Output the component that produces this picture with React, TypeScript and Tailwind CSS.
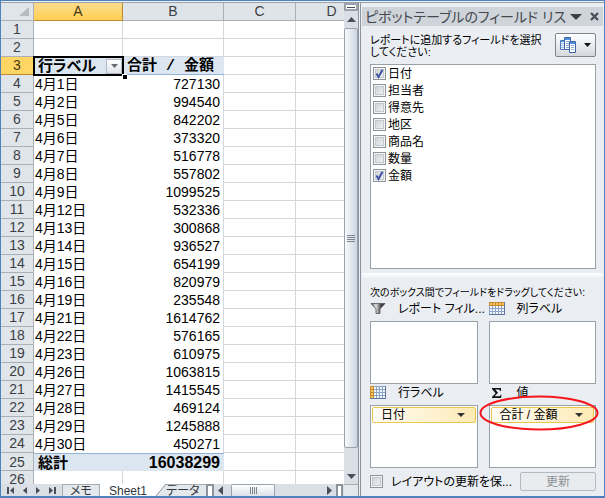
import { useState } from 'react';
import type { ReactNode } from 'react';
import clsx from 'clsx';

const rows: [string, number][] = [
    ['4月1日', 727130],
    ['4月2日', 994540],
    ['4月5日', 842202],
    ['4月6日', 373320],
    ['4月7日', 516778],
    ['4月8日', 557802],
    ['4月9日', 1099525],
    ['4月12日', 532336],
    ['4月13日', 300868],
    ['4月14日', 936527],
    ['4月15日', 654199],
    ['4月16日', 820979],
    ['4月19日', 235548],
    ['4月21日', 1614762],
    ['4月22日', 576165],
    ['4月23日', 610975],
    ['4月26日', 1063815],
    ['4月27日', 1415545],
    ['4月28日', 469124],
    ['4月29日', 1245888],
    ['4月30日', 450271],
];

const fields = ['日付', '担当者', '得意先', '地区', '商品名', '数量', '金額'];

const grid = 'border-r border-b border-[#d4d8dc]';

function Arrow({ dir, className }: { dir: 'up' | 'down' | 'left' | 'right'; className?: string }) {
    const d = {
        up: 'M0 5L4.5 0L9 5Z',
        down: 'M0 0H9L4.5 5Z',
        left: 'M5 0V9L0 4.5Z',
        right: 'M0 0L5 4.5L0 9Z',
    }[dir];
    const flat = dir === 'up' || dir === 'down';
    return (
        <svg width={flat ? 9 : 5} height={flat ? 5 : 9} className={clsx('shrink-0', className)} fill="currentColor">
            <path d={d} />
        </svg>
    );
}

function RowHead({ n, active }: { n: number; active?: boolean }) {
    return (
        <th
            scope="row"
            className={clsx(
                'border-r border-b text-center font-normal',
                active ? 'border-[#c28a30] bg-[#ffd564] text-[#4a3a10]' : 'border-[#a9b0b8] bg-[#e0e5ea] text-[#3c4046]'
            )}
        >
            {n}
        </th>
    );
}

function Sheet() {
    return (
        <div className="min-h-0 min-w-0 flex-1 overflow-hidden bg-white">
            <table className="w-[367px] table-fixed border-separate border-spacing-0 text-[14px] leading-[17px] text-black">
                <colgroup>
                    <col className="w-[33px]" />
                    <col className="w-[89px]" />
                    <col className="w-[101px]" />
                    <col className="w-[72px]" />
                    <col className="w-[72px]" />
                </colgroup>
                <thead>
                    <tr className="h-[18px]">
                        <td className="border-r border-b border-[#a9b0b8] bg-[#e0e5ea]">
                            <svg width="10" height="9" className="ml-auto mr-1" fill="#b4bbc2">
                                <path d="M10 0V9H0Z" />
                            </svg>
                        </td>
                        {['A', 'B', 'C', 'D'].map((c) => (
                            <th
                                key={c}
                                scope="col"
                                className={clsx(
                                    'border-r border-b font-normal',
                                    c === 'A'
                                        ? 'border-[#c28a30] bg-linear-to-b from-[#fbdc8c] to-[#ffcf4f] text-[#4a3a10]'
                                        : 'border-[#a9b0b8] bg-[#dfe4e9] text-[#3c4046]'
                                )}
                            >
                                {c}
                            </th>
                        ))}
                    </tr>
                </thead>
                <tbody>
                    {[1, 2].map((n) => (
                        <tr key={n} className="h-[18px]">
                            <RowHead n={n} />
                            <td className={grid} />
                            <td className={grid} />
                            <td className={grid} />
                            <td className={grid} />
                        </tr>
                    ))}
                    <tr className="h-[18px]">
                        <RowHead n={3} active />
                        <td className="relative bg-[#dce6f1] text-[15px] leading-4 font-bold outline-2 -outline-offset-1 outline-black">
                            <div className="flex h-4 items-center justify-between pl-1 [font-feature-settings:'palt']">
                                <span>行ラベル</span>
                                <button
                                    type="button"
                                    aria-label="フィルター"
                                    className="mr-px flex h-[15px] w-4 items-center justify-center border border-[#b5bac2] bg-linear-to-b from-white to-[#dfe3ea] text-[#666b73]"
                                >
                                    <svg width="7" height="4" fill="currentColor">
                                        <path d="M0 0H7L3.5 4Z" />
                                    </svg>
                                </button>
                            </div>
                            <span className="absolute -right-1 -bottom-1 z-10 size-[5px] border-t border-l border-white bg-black" />
                        </td>
                        <td className="border-b border-[#95b3d7] bg-[#dce6f1] pl-1 text-[15px] leading-3 font-bold whitespace-nowrap">
                            合計<span className="font-['Liberation_Mono',monospace]"> / </span>金額
                        </td>
                        <td className={grid} />
                        <td className={grid} />
                    </tr>
                    {rows.map(([day, amount], i) => (
                        <tr key={day} className="h-[18px]">
                            <RowHead n={i + 4} />
                            <td className="pl-px">{day}</td>
                            <td className="border-r border-[#d4d8dc] pr-[3px] text-right">{amount}</td>
                            <td className={grid} />
                            <td className={grid} />
                        </tr>
                    ))}
                    <tr className="h-[18px] bg-[#dce6f1] leading-4 font-bold">
                        <RowHead n={25} />
                        <td className="border-t border-[#95b3d7] pl-1 text-[15px]">総計</td>
                        <td className="border-t border-[#95b3d7] pr-1 text-right text-[16px]">16038299</td>
                        <td className={clsx(grid, 'bg-white')} />
                        <td className={clsx(grid, 'bg-white')} />
                    </tr>
                    <tr className="h-[18px]">
                        <RowHead n={26} />
                        <td className={grid} />
                        <td className={grid} />
                        <td className={grid} />
                        <td className={grid} />
                    </tr>
                </tbody>
            </table>
        </div>
    );
}

function SheetTabs() {
    return (
        <div className="flex h-3 shrink-0 overflow-hidden bg-[#d9dfe5] text-[12px] leading-3 text-[#33373d]">
            <div className="flex w-[61px] items-center justify-around px-px text-[#4a4f57]">
                <button type="button" aria-label="先頭のシート" className="flex">
                    <svg width="7" height="9" fill="currentColor"><path d="M0 1H2V8H0ZM7 1V8L3 4.5Z" /></svg>
                </button>
                <button type="button" aria-label="前のシート" className="flex">
                    <svg width="4" height="9" fill="currentColor"><path d="M4 1V8L0 4.5Z" /></svg>
                </button>
                <button type="button" aria-label="次のシート" className="flex">
                    <svg width="4" height="9" fill="currentColor"><path d="M0 1L4 4.5L0 8Z" /></svg>
                </button>
                <button type="button" aria-label="最後のシート" className="flex">
                    <svg width="7" height="9" fill="currentColor"><path d="M0 1L4 4.5L0 8ZM5 1H7V8H5Z" /></svg>
                </button>
            </div>
            <button type="button" className="w-[38px] border-x border-t border-[#a3abb3] bg-[#e3e8ec] [font-feature-settings:'palt']">メモ</button>
            <button type="button" className="w-14 bg-white pt-px">Sheet1</button>
            <svg width="10" height="12" className="shrink-0">
                <path d="M0 0H10L0 12Z" fill="#fff" />
                <path d="M10 0L0 12H10Z" fill="#e3e8ec" />
                <path d="M10 0L0 12" stroke="#8b939c" />
            </svg>
            <button type="button" className="w-10 overflow-hidden border-t border-[#a3abb3] bg-[#e3e8ec] text-left whitespace-nowrap [font-feature-settings:'palt']">
                データ
            </button>
            <div className="w-2 border-2 border-b-0 border-[#8b939c] bg-white" />
            <div className="flex min-w-0 flex-1 items-center justify-between px-1 text-[#4a4f57]">
                <Arrow dir="left" />
                <div className="mr-auto ml-2 flex h-full w-11 items-center justify-center gap-px rounded-t-xs border border-b-0 border-[#98a1ac] bg-linear-to-b from-white to-[#dbe1e8]">
                    {[0, 1, 2, 3].map((i) => (
                        <span key={i} className="h-[7px] w-px bg-[#7c848d]" />
                    ))}
                </div>
                <Arrow dir="right" />
            </div>
            <div className="mr-px w-[7px] border-2 border-b-0 border-[#8b939c] bg-white" />
        </div>
    );
}

function VScroll() {
    return (
        <div className="flex w-[15px] shrink-0 flex-col items-center border-r border-[#8b939c] bg-[#d9dfe5] text-[#4a4f57]">
            <div className="flex h-2 w-full items-center justify-center border-2 border-[#9aa2ab] bg-white">
                <span className="h-px w-2 bg-[#4a4f57]" />
            </div>
            <button type="button" aria-label="上へ" className="flex h-[17px] items-center">
                <Arrow dir="up" />
            </button>
            <div className="flex w-full flex-1 flex-col items-center justify-center gap-px rounded-xs border border-[#98a1ac] bg-linear-to-r from-[#f8fafc] to-[#cdd6e1]">
                {[0, 1, 2, 3].map((i) => (
                    <span key={i} className="h-px w-2 bg-[#7c848d]" />
                ))}
            </div>
            <button type="button" aria-label="下へ" className="flex h-9 items-end pb-[5px]">
                <Arrow dir="down" />
            </button>
            <div className="h-3 w-full border-t border-[#a3abb3] bg-[#e3e8ec]" />
        </div>
    );
}

function Check({ id, checked, onChange }: { id: string; checked: boolean; onChange: () => void }) {
    return (
        <span className="relative flex size-[13px] shrink-0">
            <input
                id={id}
                type="checkbox"
                checked={checked}
                onChange={onChange}
                className="size-[13px] appearance-none border border-[#8e959c] bg-linear-to-br from-[#c9ced2] to-[#f6f7f8] shadow-[inset_0_0_0_1px_#f4f4f4,inset_0_0_0_2px_#c3c8cc]"
            />
            {checked && (
                <svg viewBox="0 0 13 13" className="pointer-events-none absolute inset-0" fill="none">
                    <path d="M3.5 6.5L5.5 10L9.5 2.8" stroke="#3f55a5" strokeWidth="2" />
                </svg>
            )}
        </span>
    );
}

function GridIcon({ side }: { side: 'top' | 'left' }) {
    const cells: ReactNode[] = [];
    for (let y = 0; y < 4; y++) {
        for (let x = 0; x < 5; x++) {
            const hot = side === 'top' ? y === 0 : x === 0;
            cells.push(
                <rect key={`${x}-${y}`} x={1 + x * 3} y={1 + y * 3} width="2" height="2" fill={hot ? '#f7c765' : '#f4f8fd'} />
            );
        }
    }
    return (
        <svg width="16" height="13" className="shrink-0">
            <rect width="16" height="13" fill="#8ba3c7" />
            {side === 'top' ? <rect width="16" height="4" fill="#c98a2e" /> : <rect width="4" height="13" fill="#c98a2e" />}
            {cells}
            <path d="M0 12.5H15.5V0" stroke="#5c7599" fill="none" />
        </svg>
    );
}

function FunnelIcon() {
    return (
        <svg width="16" height="13" className="shrink-0">
            <defs>
                <linearGradient id="funnel" x1="0" x2="1">
                    <stop offset="0" stopColor="#4c4c4c" />
                    <stop offset=".35" stopColor="#e2e2e2" />
                    <stop offset=".7" stopColor="#4a4a4a" />
                    <stop offset="1" stopColor="#222" />
                </linearGradient>
            </defs>
            <path d="M1 1.5H15L10 7V11.5H6V7Z" fill="url(#funnel)" stroke="#555" strokeWidth=".8" />
        </svg>
    );
}

function SigmaIcon() {
    return (
        <svg width="16" height="13" className="shrink-0" fill="#111">
            <path d="M3 2H12V5H11C10.8 3.8 10.3 3.4 9 3.4H6.2L9 6.7L5.6 10.3H9.5C10.8 10.3 11.3 9.8 11.6 8.7H12.5L12 12H3V11L6.6 7.2L3 3Z" />
        </svg>
    );
}

// three overlapping sheets, the middle one highest
function PagesIcon() {
    return (
        <svg width="16" height="16" className="shrink-0">
            <path d="M.5 3.5H5.5V12.5H.5Z" fill="#eef4fc" stroke="#5079b5" />
            <path d="M1 4.5H5" stroke="#4c8fe0" />
            <path d="M1 6.5H5M1 8.5H5M1 10.5H5" stroke="#a9c1e2" />
            <path d="M4.5.5H10.5V12.5H4.5Z" fill="#fff" stroke="#3e66a6" />
            <path d="M5 1.5H10M5 2.5H10" stroke="#4c8fe0" />
            <path d="M6 4.5H9M6 6.5H9M6 8.5H9M6 10.5H9" stroke="#8fadd6" />
            <path d="M9.5 4.5H15.5V15.5H9.5Z" fill="#fff" stroke="#3e66a6" />
            <path d="M10 5.5H15M10 6.5H15" stroke="#4c8fe0" />
            <path d="M11 8.5H14M11 10.5H14M11 12.5H14" stroke="#8fadd6" />
        </svg>
    );
}

function Area({ icon, title, item, ringed }: { icon: ReactNode; title: string; item?: string; ringed?: boolean }) {
    return (
        <section className="min-w-0">
            <h3 className="flex h-[21px] items-center gap-3 pb-1 text-[12px]">
                {icon}
                <span className="whitespace-nowrap">{title}</span>
            </h3>
            <div className="relative h-[63px] border border-[#98a0a8] bg-white p-px">
                {item && (
                    <button
                        type="button"
                        className="flex h-4 w-full items-center justify-between rounded-xs border border-[#ecc34b] bg-linear-to-r from-[#fffdf5] to-[#fdeab5] pr-[10px] pl-2 text-[12px] leading-3"
                    >
                        {item}
                        <svg width="8" height="4" fill="#333"><path d="M0 0H8L4 4Z" /></svg>
                    </button>
                )}
                {ringed && (
                    <svg viewBox="0 0 120 36" className="pointer-events-none absolute -top-[11px] -left-[11px] z-10 h-9 w-[120px]" fill="none">
                        <ellipse cx="60" cy="18" rx="58.5" ry="16.5" stroke="#f5151b" strokeWidth="2" />
                    </svg>
                )}
            </div>
        </section>
    );
}

function FieldPane() {
    const [picked, setPicked] = useState<string[]>(['日付', '金額']);
    const [defer, setDefer] = useState(false);

    const toggle = (f: string) => {
        setPicked((p) => (p.includes(f) ? p.filter((x) => x !== f) : [...p, f]));
    };

    return (
        <aside className="ml-px flex w-[244px] shrink-0 flex-col border-l border-[#8b939c] bg-[#eaeef3] px-px pt-1 text-[12px] leading-3 text-black [font-feature-settings:'palt']">
            <header className="flex h-[19px] shrink-0 items-center bg-[#ced4da] pr-1 pl-[3px] text-[14px] text-[#44484e]">
                <h2 className="flex-1 whitespace-nowrap">ピボットテーブルのフィールド リス</h2>
                <button type="button" aria-label="メニュー" className="flex">
                    <svg width="12" height="6" fill="#3c4046"><path d="M0 0H12L6 6Z" /></svg>
                </button>
                <button type="button" aria-label="閉じる" className="ml-2 flex">
                    <svg width="9" height="9" stroke="#4a4f57" strokeWidth="2.4"><path d="M1 1L8 8M8 1L1 8" /></svg>
                </button>
            </header>

            <div className="flex min-h-0 flex-1 flex-col pt-[7px] pr-[7px] pb-1 pl-2">
                <div className="flex h-[31px] shrink-0 items-start justify-between">
                    <p className="pt-px text-[11px] whitespace-nowrap">
                        レポートに追加するフィールドを選択
                        <br />
                        してください:
                    </p>
                    <button
                        type="button"
                        aria-label="レイアウト"
                        className="flex h-6 w-[41px] shrink-0 items-center justify-center gap-2 rounded-xs border border-[#7f868e] bg-linear-to-b from-white to-[#d5d9de]"
                    >
                        <PagesIcon />
                        <svg width="7" height="4" fill="#111"><path d="M0 0H7L3.5 4Z" /></svg>
                    </button>
                </div>

                <ul className="min-h-0 flex-1 overflow-hidden border border-[#98a0a8] bg-white pl-[2px]">
                    {fields.map((f) => (
                        <li key={f} className="flex h-[17px] items-center gap-0.5">
                            <Check id={`field-${f}`} checked={picked.includes(f)} onChange={() => toggle(f)} />
                            <label htmlFor={`field-${f}`}>{f}</label>
                        </li>
                    ))}
                </ul>
            </div>

            <div className="h-[5px] shrink-0 bg-linear-to-b from-white to-[#eef1f4]" />

            <div className="shrink-0 pt-[9px] pr-[7px] pb-[5px] pl-2">
                <p className="pb-px text-[10px] whitespace-nowrap">次のボックス間でフィールドをドラッグしてください:</p>
                <div className="grid grid-cols-2 gap-x-[11px]">
                    <Area icon={<FunnelIcon />} title="レポート フィル..." />
                    <Area icon={<GridIcon side="top" />} title="列ラベル" />
                    <Area icon={<GridIcon side="left" />} title="行ラベル" item="日付" />
                    <Area icon={<SigmaIcon />} title="値" item="合計 / 金額" ringed />
                </div>
                <div className="flex items-center gap-2 pt-1">
                    <Check id="defer" checked={defer} onChange={() => setDefer(!defer)} />
                    <label htmlFor="defer" className="flex-1 whitespace-nowrap">レイアウトの更新を保...</label>
                    <button type="button" disabled={!defer} className="h-[19px] w-[86px] rounded-xs border border-[#b4babf] bg-[#e9ecee] text-[#8d9297]">
                        更新
                    </button>
                </div>
            </div>
        </aside>
    );
}

export default function App() {
    return (
        <div className="flex h-screen flex-col overflow-hidden border border-b-2 border-[#4f81bd] bg-[#eef1f5] font-['Liberation_Sans','Noto_Sans_CJK_JP',sans-serif]">
            <div className="mt-px h-px shrink-0 bg-[#9ba3ac]" />
            <div className="flex min-h-0 flex-1">
                <main className="flex min-w-0 flex-1 flex-col">
                    <Sheet />
                    <SheetTabs />
                </main>
                <VScroll />
                <FieldPane />
            </div>
        </div>
    );
}
